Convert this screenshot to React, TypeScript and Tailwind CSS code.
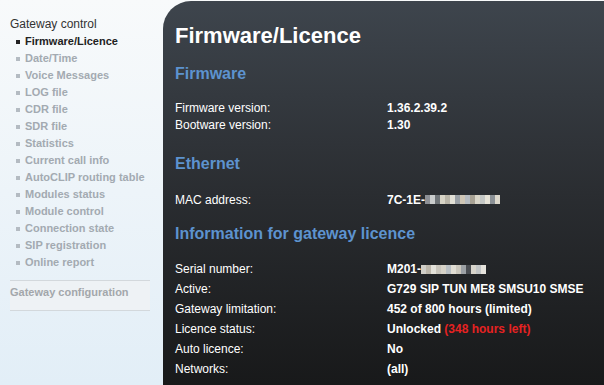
import React from 'react';

const menu = [
  'Firmware/Licence',
  'Date/Time',
  'Voice Messages',
  'LOG file',
  'CDR file',
  'SDR file',
  'Statistics',
  'Current call info',
  'AutoCLIP routing table',
  'Modules status',
  'Module control',
  'Connection state',
  'SIP registration',
  'Online report',
];

// pixelated blur used to hide parts of the serial / MAC
const Blur = ({ colors }: { colors: string[] }) => (
  <span className="inline-flex h-[9px] align-middle">
    {colors.map((c, i) => (
      <span key={i} className="w-[5px] h-full" style={{ background: c }} />
    ))}
  </span>
);

const macBlur = ['#8d9096', '#c9cccc', '#6f7478', '#d7d4c6', '#b9b5a8', '#e2e0d6', '#9aa0a6', '#cfc6b6', '#b7bcc1', '#a8a294', '#d9d5c8', '#c4c7c5', '#e6e3d8', '#8b9196', '#dcd8cc'];
const serialBlur = ['#d1cfc8', '#bdb7ab', '#e3e1d9', '#c9c5bc', '#d6d2c7', '#b9bfc3', '#e0ddd3', '#cbc7bd', '#9da1a5', '#4a4d52', '#d7d4cb', '#c2c5c6', '#e5e3dc'];

const Row = ({ label, children, h }: { label: string; children: React.ReactNode; h: string }) => (
  <div className={`flex items-center ${h}`}>
    <div className="w-[212px] shrink-0">{label}</div>
    <div className="font-bold">{children}</div>
  </div>
);

const Heading = ({ children, mt }: { children: React.ReactNode; mt: string }) => (
  <h2 className={`${mt} text-[16px] leading-[20px] font-bold text-[#5d93cf]`}>{children}</h2>
);

const App = () => {
  return (
    <div className="w-[604px] h-[385px] flex overflow-hidden bg-gradient-to-b from-[#f8fafb] to-[#e2eef7] font-['Liberation_Sans',Arial,sans-serif]">
      <aside className="w-[163px] shrink-0 pl-[10px] pr-[13px]">
        <div className="mt-[16px] h-[17px] leading-[17px] text-[12px] text-[#333]">Gateway control</div>
        <ul>
          {menu.map((item, i) => (
            <li key={item} className="flex items-center h-[17px] pl-[6px] text-[11px] font-bold">
              <span className={`w-[4px] h-[4px] mr-[5px] ${i === 0 ? 'bg-[#222]' : 'bg-[#b4bbc2]'}`} />
              <span className={i === 0 ? 'text-[#222]' : 'text-[#a3aab1]'}>{item}</span>
            </li>
          ))}
        </ul>
        <div className="mt-[9px] border-t border-b border-[#d3d8dc] bg-[#eef2f5] h-[31px] pt-[5px] leading-[13px] text-[11px] font-bold text-[#a3a7ab]">
          Gateway configuration
        </div>
      </aside>

      <main className="flex-1 rounded-tl-[28px] mt-[1px] bg-gradient-to-b from-[#3e454d] via-[#2a2d31] to-[#18191a] pl-[12px] text-white text-[12px]">
        <h1 className="mt-[22px] text-[22px] leading-[26px] font-bold">Firmware/Licence</h1>

        <Heading mt="mt-[15px]">Firmware</Heading>
        <div className="mt-[15px]">
          <Row label="Firmware version:" h="h-[17px]">1.36.2.39.2</Row>
          <Row label="Bootware version:" h="h-[17px]">1.30</Row>
        </div>

        <Heading mt="mt-[21px]">Ethernet</Heading>
        <div className="mt-[17px]">
          <Row label="MAC address:" h="h-[17px]">
            <span className="inline-flex items-center">7C-1E-<Blur colors={macBlur} /></span>
          </Row>
        </div>

        <Heading mt="mt-[16px]">Information for gateway licence</Heading>
        <div className="mt-[15px]">
          <Row label="Serial number:" h="h-[20px]">
            <span className="inline-flex items-center">M201-<Blur colors={serialBlur} /></span>
          </Row>
          <Row label="Active:" h="h-[20px]">G729 SIP TUN ME8 SMSU10 SMSE</Row>
          <Row label="Gateway limitation:" h="h-[20px]">452 of 800 hours (limited)</Row>
          <Row label="Licence status:" h="h-[20px]">
            Unlocked <span className="text-[#e62222]">(348 hours left)</span>
          </Row>
          <Row label="Auto licence:" h="h-[20px]">No</Row>
          <Row label="Networks:" h="h-[20px]">(all)</Row>
        </div>
      </main>
    </div>
  );
};

export default App;
